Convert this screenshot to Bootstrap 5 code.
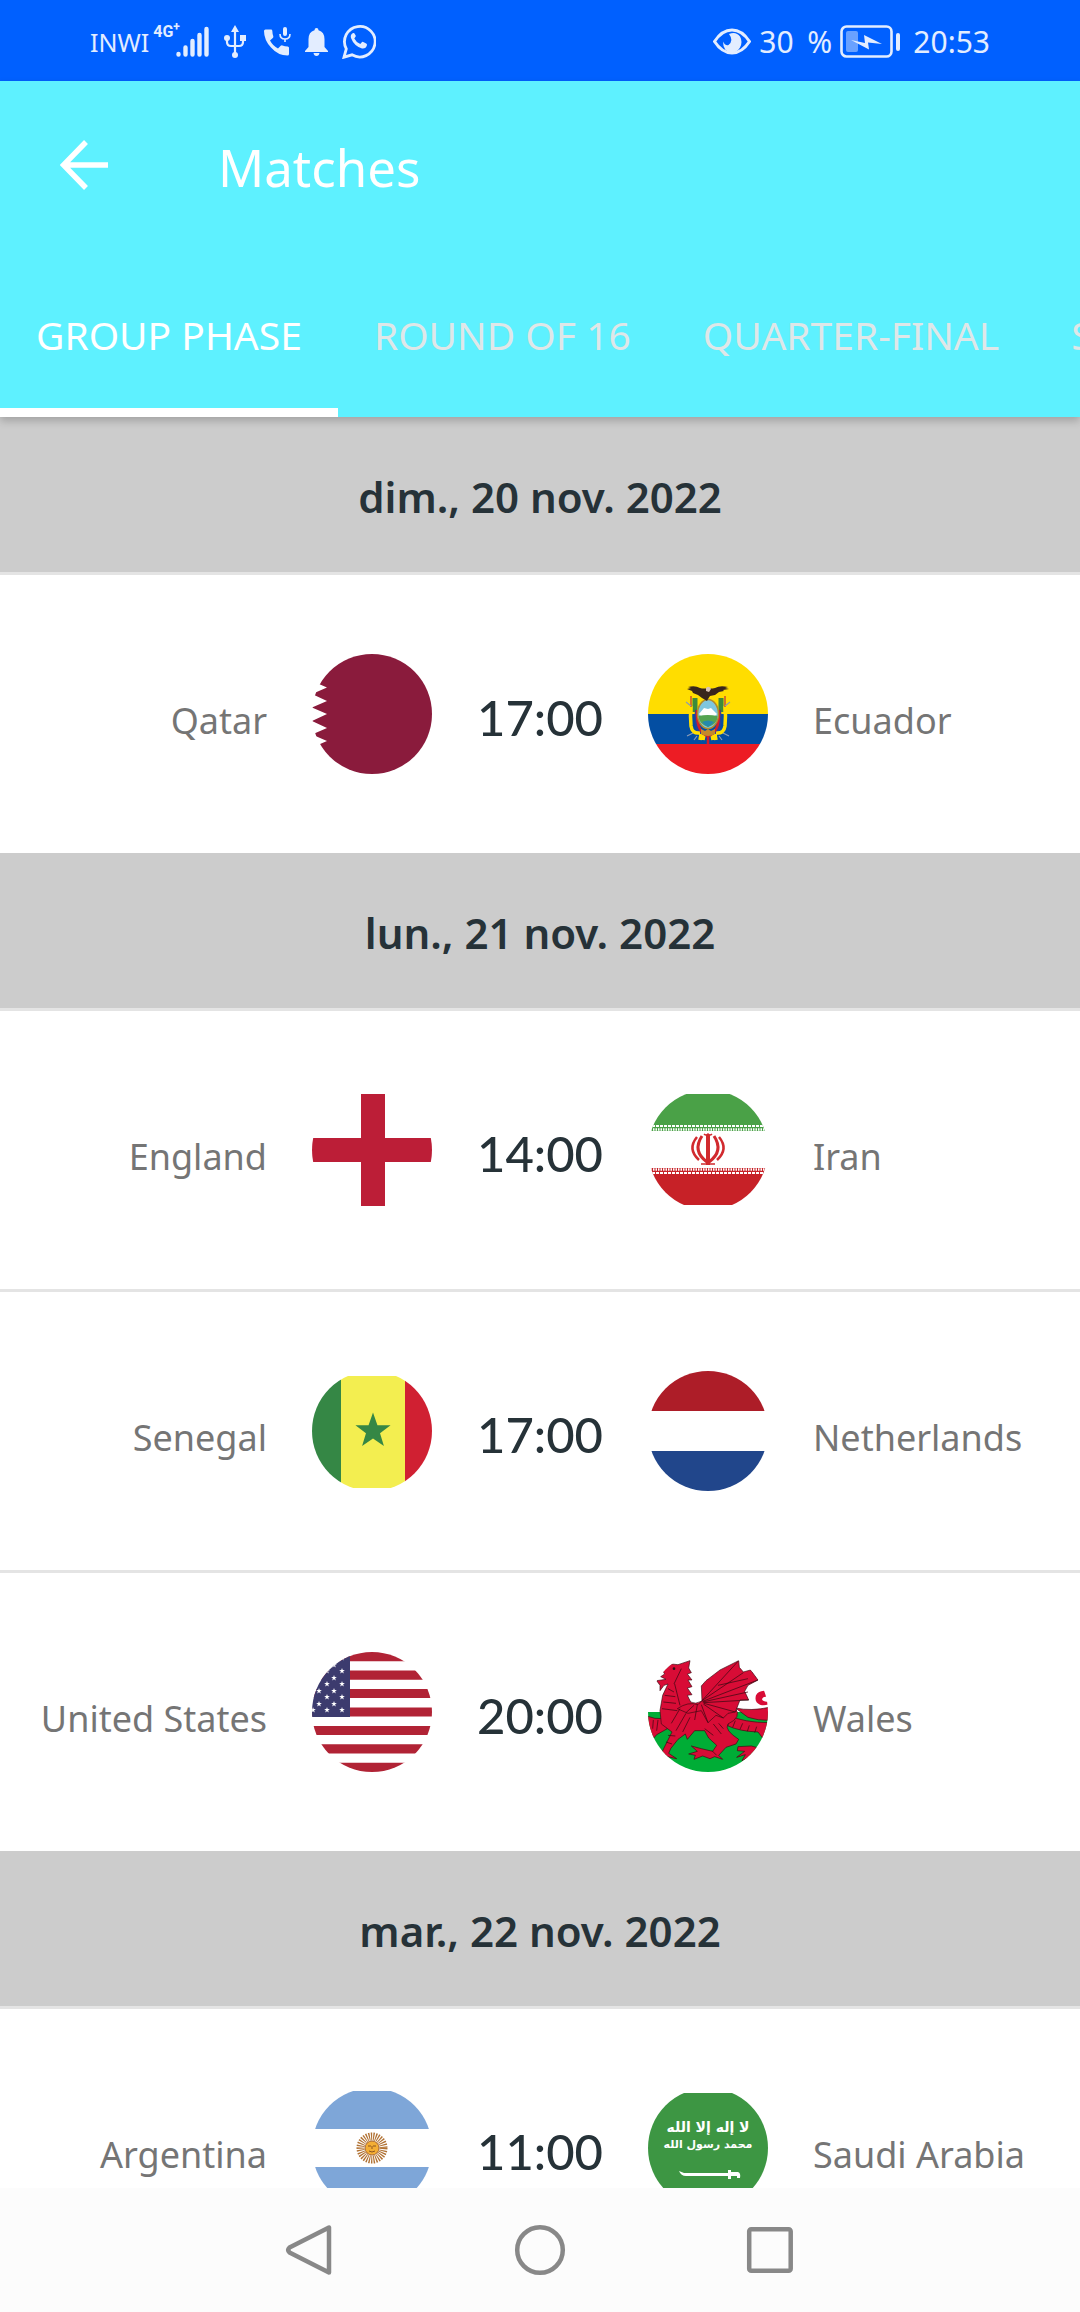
<!DOCTYPE html>
<html lang="fr">
<head>
<meta charset="utf-8">
<meta name="viewport" content="width=device-width, initial-scale=1">
<title>Matches</title>
<link href="https://cdn.jsdelivr.net/npm/bootstrap@5.3.0/dist/css/bootstrap.min.css" rel="stylesheet">
<style>
  body { font-family: "Noto Sans", "Open Sans", sans-serif; color: #263238; background: #fff; }
  svg { display: block; flex: none; }
  .status-strip { height: 81px; background: #0060ff; color: #e3edff; padding: 2px 90px 0; font-size: 30px; line-height: 36px; }
  .status-strip .carrier { font-size: 25px; }
  .status-strip .net-type { font-size: 16px; line-height: 16px; font-weight: 700; font-family: "Roboto", sans-serif; margin-right: -4px; }
  .status-left { gap: 14px; }
  .charge-level { margin: 0 8px; }
  .app-top { background: #5ef1ff; z-index: 2; box-shadow: 0 4px 8px rgba(0,0,0,.2); }
  .title-bar { height: 168px; padding: 0 60px; gap: 110px; }
  .title-bar h1 { font-size: 51px; line-height: 60px; padding-top: 4px; font-weight: 400; color: #fff; }
  .phase-tabs { height: 168px; overflow: hidden; }
  .phase-tabs a { padding: 12px 36px 0; font-size: 39px; line-height: 48px; color: #dfe7e8; border-bottom: 9px solid transparent; }
  .phase-tabs a.current { color: #fff; border-bottom-color: #fff; }
  .match-list { min-height: 0; overflow-y: auto; scrollbar-width: none; }
  .match-list::-webkit-scrollbar { display: none; }
  .day-head { height: 158px; background: #ccc; border-bottom: 3px solid #e4e4e4; font-size: 42px; line-height: 54px; font-weight: 600; margin: 0; padding-top: 4px; }
  .fixture { height: 278px; }
  .fixture + .fixture { height: 281px; border-top: 3px solid #e4e4e4; }
  .team-name { flex: 1 1 0; color: #757575; font-size: 36px; line-height: 48px; padding: 14px 45px 0; }
  .team-name.home-side { text-align: right; padding-left: 0; }
  .team-name.away-side { padding-right: 0; }
  .kickoff { width: 216px; text-align: center; font-family: "Lato", "Noto Sans", sans-serif; font-size: 49px; line-height: 60px; padding-top: 6px; font-weight: 500; }
  .sys-nav { height: 124px; background: #fcfcfc; gap: 174px; }
  .sys-nav button, .title-bar button { background: none; border: 0; padding: 0; }
</style>
</head>
<body>
<svg width="0" height="0" class="position-absolute" aria-hidden="true">
  <defs>
    <clipPath id="disc"><circle cx="60" cy="60" r="60"/></clipPath>
    <path id="star" d="M0-10 2.4-3.1 9.5-3.1 3.8 1.2 5.9 8.1 0 4-5.9 8.1-3.8 1.2-9.5-3.1-2.4-3.1Z"/>
  </defs>
</svg>
<div class="d-flex flex-column vh-100">
  <div class="status-strip d-flex align-items-center justify-content-between text-nowrap flex-shrink-0">
    <div class="status-left d-flex align-items-center">
      <div class="d-flex align-items-center">
        <span class="carrier">INWI</span>
        <span class="net-type align-self-start ms-1">4G<sup>+</sup></span>
        <svg width="34" height="32" viewBox="0 0 34 32" stroke="currentColor" stroke-width="4.400" stroke-linecap="round"><path d="M2.500 28v.5M9.500 21.500v7M16.500 15v13.500M23.500 9v19.500M30.500 3v25.500"/></svg>
      </div>
      <svg width="22" height="33" viewBox="0 0 22 33" fill="none" stroke="currentColor" stroke-width="2.200"><path d="M11 5v24M3 13v4q0 4 4 4h8q4 0 4-4v-4"/><path d="M11 0l4 7H7zM16 10h6v6h-6z" fill="currentColor" stroke="none"/><circle cx="3" cy="13" r="3" fill="currentColor" stroke="none"/><circle cx="11" cy="30" r="3" fill="currentColor" stroke="none"/></svg>
      <svg class="ms-1" width="27" height="29" viewBox="0 0 27 29" fill="currentColor"><path d="M0 4q0-1.500 1.500-1.500H7q1.200 0 1.300 1.300.1 3 1 5.400.3 1-.5 1.700L6 13.500Q9 19 14 21.500l2.700-2.700q.8-.7 1.700-.4 2.400.9 5.300 1 1.300.1 1.300 1.300V27q0 1.500-1.500 1.500Q14 28.500 7 20.500 0 13 0 4Z"/><rect x="19" y="0" width="4" height="9" rx="2"/><path d="M16 7q0 5 5 5t5-5M21 12v3" fill="none" stroke="currentColor" stroke-width="1.600"/></svg>
      <svg width="23" height="28" viewBox="0 0 23 28" fill="currentColor"><path d="M11.500 0q2 0 2 2.300 6 1.700 6 9V19l3.500 4v1H0v-1l3.500-4v-7.700q0-7.300 6-9Q9.500 0 11.500 0ZM8.500 25h6q-.5 3-3 3t-3-3Z"/></svg>
      <svg width="34" height="35" viewBox="0 0 34 35" fill="none" stroke="currentColor" stroke-width="2.800"><path d="M2 33.200l2.300-8.400A15.300 15.300 0 1 1 10 30.800Z"/><path d="M11 9q-3 1.500-2 5 3 8 11 10.500 4 .5 5-3.500.2-1-.8-1.500l-3-1.500q-1-.4-1.600.4l-1.300 1.600q-4-1.500-6-5.500l1.200-1.700q.5-.6.2-1.300L12.300 9.300Q12 8.700 11 9Z" fill="currentColor" stroke="none"/></svg>
    </div>
    <div class="d-flex align-items-center">
      <svg width="38" height="27" viewBox="0 0 38 27"><path d="M1.500 13.500Q9 2 19 2t17.500 11.500Q29 25 19 25T1.500 13.500Z" fill="none" stroke="currentColor" stroke-width="3"/><path d="M16 6q7-3 11 2.500 3 5.500 0 11Q24 24.500 19 24.500q-9-.5-9-11 2 4.500 5.500 3.500Q21 12.500 16 6Z" fill="currentColor"/></svg>
      <span class="charge-level">30&nbsp;&#8202;&#8202;%</span>
      <svg class="me-2" width="61" height="34" viewBox="0 0 61 34"><rect x="1.500" y="1.500" width="50" height="30" rx="5" fill="none" stroke="currentColor" stroke-width="2.600"/><rect x="6" y="6" width="12" height="21" rx="2" fill="#69a1ff"/><path d="M11 15l14 3-1-8 18 9-14-1.500 1 7Z" fill="currentColor"/><rect x="56" y="8" width="4" height="18" rx="2" fill="currentColor"/></svg>
      <span class="ms-1">20:53</span>
    </div>
  </div>

  <header class="app-top position-relative flex-shrink-0">
    <div class="title-bar d-flex align-items-center">
      <button type="button" aria-label="Back"><svg width="48" height="50" viewBox="0 0 48 50" fill="none" stroke="#fff" stroke-width="5.500"><path d="M48 25H4M26 2 3.500 25 26 48"/></svg></button>
      <h1 class="mb-0">Matches</h1>
    </div>
    <nav class="phase-tabs d-flex text-nowrap">
      <a class="current d-flex align-items-center text-decoration-none" href="#group" aria-current="page">GROUP PHASE</a>
      <a class="d-flex align-items-center text-decoration-none" href="#r16">ROUND OF 16</a>
      <a class="d-flex align-items-center text-decoration-none" href="#quarter">QUARTER-FINAL</a>
      <a class="d-flex align-items-center text-decoration-none" href="#semi">SEMI-FINAL</a>
    </nav>
  </header>

  <main class="match-list flex-grow-1 text-nowrap">
    <h2 class="day-head d-flex align-items-center justify-content-center">dim., 20 nov. 2022</h2>
    <div class="fixture d-flex align-items-center">
      <div class="team-name home-side">Qatar</div>
      <svg width="120" height="120" viewBox="0 0 120 120"><g clip-path="url(#disc)"><path fill="#8a1b3c" d="M0 0h120v120H0V93.500L15 87 0 80.500 15 74 0 67 15 60 0 53.500 15 47 0 40 15 33.500 0 27Z"/></g></svg>
      <div class="kickoff">17:00</div>
      <svg width="120" height="120" viewBox="0 0 120 120"><g clip-path="url(#disc)"><path fill="#fd0" d="M0 0h120v60H0z"/><path fill="#034ea2" d="M0 60h120v30H0z"/><path fill="#ed1c24" d="M0 90h120v30H0z"/></g>
        <path d="M47 44v14M73 44v14" stroke="#3c8a3c" stroke-width="5"/><path d="M49 56q-2 18 4 24M71 56q2 18-4 24" fill="none" stroke="#24429b" stroke-width="4"/><path d="M43 52q-1 10 0 20 1 8 9 7M77 52q1 10 0 20-1 8-9 7M53 80l-1 6M56 81l-1 5M67 80l1 6M64 81l1 5" fill="none" stroke="#ffdf00" stroke-width="3.500"/><path d="M49 56q-1 22 11 26 12-4 11-26M60 80v10" fill="none" stroke="#d21e2b" stroke-width="2.500"/><path d="M43 42v11M77 42v11" stroke="#c94f33" stroke-width="1.500"/><path d="M38 48l5 4M82 48l-5 4M39 82l6-3M81 82l-6-3M46 86l3-4M74 86l-3-4" stroke="#8b9bb5" stroke-width="1.200"/>
        <ellipse cx="60" cy="60" rx="10.500" ry="14.500" fill="#7fc6df" stroke="#b28b2d" stroke-width="1.500"/><path d="M51 60l5-6 4 1 3-1 6 6-2 2H53Z" fill="#fff"/><path d="M50.500 62q9-2 19 0 0 8-9.500 11-9-3-9.500-11Z" fill="#54a451"/><path d="M54 68q6-3 12 0-3 4-6 5-4-2-6-5Z" fill="#2589ad"/><path d="M53 75l4 2 3-2 3 2 4-2v5q-7 4-14 0Z" fill="#c5892a"/>
        <path d="M39 35l4-1-3-1q7-2 12 1 4 1 7 0 3 1 8 0 5-3 13-1l-3 1 4 1-6 1 1 1-5 1-4 3-5 1-2 3-1 2-5-3-4-3-5-2-1-2Z" fill="#38251c"/><path d="M58 34q3-3 5 1l-2 3-3-1Z" fill="#d9c2b4"/></svg>
      <div class="team-name away-side">Ecuador</div>
    </div>

    <h2 class="day-head d-flex align-items-center justify-content-center">lun., 21 nov. 2022</h2>
    <div class="fixture d-flex align-items-center">
      <div class="team-name home-side">England</div>
      <svg width="120" height="120" viewBox="0 0 120 120"><g clip-path="url(#disc)" fill="#bc1e37"><path d="M49 4h24v112H49z"/><path d="M0 48h120v24H0z"/></g></svg>
      <div class="kickoff">14:00</div>
      <svg width="120" height="120" viewBox="0 0 120 120"><g clip-path="url(#disc)"><path fill="#4aa147" d="M0 4h120v37H0z"/><path fill="#c72127" d="M0 78h120v37H0z"/><path d="M0 36h120M0 83h120" stroke="#fff" stroke-width="2" stroke-dasharray="3 1"/><path d="M0 39.500h120M0 79.500h120" stroke="#fff" stroke-width="2.500" stroke-dasharray="1.500 1"/></g>
        <g fill="none" stroke="#d12a2e"><path d="M60 45v30" stroke-width="4"/><path d="M56 44q2 2 4 0 2 2 4 0M53 74h14" stroke-width="1.500"/><path d="M54 46q-10 15 5 26M66 46q10 15-5 26" stroke-width="3"/><path d="M49 47q-10 12 2 23M71 47q10 12-2 23" stroke-width="2.500"/></g></svg>
      <div class="team-name away-side">Iran</div>
    </div>
    <div class="fixture d-flex align-items-center">
      <div class="team-name home-side">Senegal</div>
      <svg width="120" height="120" viewBox="0 0 120 120"><g clip-path="url(#disc)"><path fill="#358745" d="M0 5h29v112H0z"/><path fill="#f3ee50" d="M29 5h64v112H29z"/><path fill="#d02032" d="M93 5h27v112H93z"/></g><use href="#star" fill="#358745" transform="translate(61 60) scale(1.850)"/></svg>
      <div class="kickoff">17:00</div>
      <svg width="120" height="120" viewBox="0 0 120 120"><g clip-path="url(#disc)"><path fill="#ad1d28" d="M0 0h120v40H0z"/><path fill="#21468b" d="M0 80h120v40H0z"/></g></svg>
      <div class="team-name away-side">Netherlands</div>
    </div>
    <div class="fixture d-flex align-items-center">
      <div class="team-name home-side">United States</div>
      <svg width="120" height="120" viewBox="0 0 120 120"><g clip-path="url(#disc)"><path stroke="#b12335" stroke-width="9.230" d="M0 4.600h120M0 23.100h120M0 41.500h120M0 60h120M0 78.500h120M0 96.900h120M0 115.400h120"/><path fill="#3c3b6e" d="M0 0h38v65H0z"/>
        <g fill="#fff"><use href="#star" transform="translate(30 19) scale(.3)"/><use href="#star" transform="translate(30 32) scale(.3)"/><use href="#star" transform="translate(30 45) scale(.3)"/><use href="#star" transform="translate(30 58) scale(.3)"/><use href="#star" transform="translate(22 13) scale(.3)"/><use href="#star" transform="translate(22 26) scale(.3)"/><use href="#star" transform="translate(22 39) scale(.3)"/><use href="#star" transform="translate(22 52) scale(.3)"/><use href="#star" transform="translate(15 19) scale(.3)"/><use href="#star" transform="translate(15 32) scale(.3)"/><use href="#star" transform="translate(15 45) scale(.3)"/><use href="#star" transform="translate(15 58) scale(.3)"/><use href="#star" transform="translate(7 39) scale(.3)"/><use href="#star" transform="translate(7 52) scale(.3)"/><use href="#star" transform="translate(1 58) scale(.3)"/><use href="#star" transform="translate(30 6) scale(.3)"/></g></g></svg>
      <div class="kickoff">20:00</div>
      <svg width="120" height="120" viewBox="0 0 120 120"><g clip-path="url(#disc)"><path fill="#00ad36" d="M0 60h120v60H0z"/>
        <g transform="scale(.33333)" stroke="#3b0a12" stroke-width="2" stroke-linejoin="round" fill="#d80c36">
          <path d="M262 168Q310 178 364 166V205Q330 206 300 196Z"/>
          <path d="M364 118Q334 112 324 130 318 150 336 158 350 162 364 156V148Q346 152 342 142 344 130 364 136Z" stroke="none"/>
          <path d="M-4 192Q22 202 44 200L58 230 26 248 14 262 8 240-4 244Z"/>
          <path d="M240 190Q290 212 364 212V256L344 258 330 240Q276 238 240 222Z"/>
          <path d="M364 270 340 290 310 282 270 284 268 296 290 298 266 316 292 308 282 326 304 316 330 330 364 300Z"/>
          <path d="M126 26 122 48 130 62 118 66 132 84 120 84 132 104 118 108 132 128 118 130 128 150Q142 158 160 148L200 150 262 168Q282 196 240 216 228 234 272 262L264 276 234 286 212 310 224 322 200 314 186 320 164 312 138 322 142 310 122 306 148 298 130 282 160 290 194 298 206 280 182 258 170 236 140 236 118 262 112 246 90 262 68 290 62 304 86 320 58 314 44 328 40 304 54 276 72 240 40 216 36 176 44 130 60 96 48 100 36 116 36 100 26 86 40 84 54 82 38 74 50 66 44 56 58 46 70 36 90 38 108 32Z"/>
          <path d="M150 158 162 146 160 102 174 86 216 54 272 26 274 46 286 60 308 54 330 84 300 100 290 118 302 144 276 144 262 180 240 184 226 198 204 190 180 212 160 176 120 184 88 170Q120 148 150 158Z"/>
          <g fill="none" stroke-width="2.200"><path d="M160 148 272 26M162 146 286 62M164 148 330 84M164 150 300 120M166 152 302 144M168 154 262 180M166 156 226 198M160 158 180 212M148 158 140 204M138 160 114 182M210 100 300 80M60 110 78 120M50 130 82 134M46 150 84 154M42 170 88 176M80 96 96 160M100 50 78 96M96 170 70 214M114 184 84 236M126 196 104 240M196 216 220 246M212 214 226 230M170 230 196 250M262 206 254 226M284 214 276 232M304 220 298 238M326 224 320 242M60 250 82 252M54 270 72 276M16 204 14 230M30 204 26 236M192 296 206 310"/></g>
          <circle cx="78" cy="50" r="4" fill="#2b1015" stroke="none"/>
        </g></g></svg>
      <div class="team-name away-side">Wales</div>
    </div>

    <h2 class="day-head d-flex align-items-center justify-content-center">mar., 22 nov. 2022</h2>
    <div class="fixture d-flex align-items-center">
      <div class="team-name home-side">Argentina</div>
      <svg width="120" height="120" viewBox="0 0 120 120"><g clip-path="url(#disc)" fill="#7ea6d8"><path d="M0 3h120v38H0z"/><path d="M0 79h120v38H0z"/></g><circle cx="60" cy="60" r="11.500" fill="none" stroke="#b17234" stroke-width="8" stroke-dasharray="1.200 1"/><circle cx="60" cy="60" r="7" fill="#f4ae35" stroke="#a9652c"/><path d="M56 58h3M61 58h3M57 63q3 2 6 0M60 58v3" stroke="#8c541f" fill="none"/></svg>
      <div class="kickoff">11:00</div>
      <svg width="120" height="120" viewBox="0 0 120 120"><g clip-path="url(#disc)"><path fill="#3d9643" d="M0 5h120v110H0z"/></g>
        <g fill="#fff" font-family="DejaVu Sans, sans-serif" font-weight="700" text-anchor="middle"><text x="60" y="44" font-size="14">لا إله إلا الله</text><text x="60" y="60" font-size="11">محمد رسول الله</text></g>
        <path d="M31 83l5 2h44v-3h3v2h7q3 1 2 6h-3v-2h-6v3h-3v-3H38q-5 0-7-5Z" fill="#fff"/></svg>
      <div class="team-name away-side">Saudi Arabia</div>
    </div>
  </main>

  <div class="sys-nav d-flex align-items-center justify-content-center flex-shrink-0">
    <button type="button" aria-label="Back"><svg width="56" height="56" viewBox="0 0 56 56" fill="none" stroke="#888" stroke-width="4.500" stroke-linejoin="round"><path d="M47 5.500v45L7.500 30.500q-2.500-2.500 0-5Z"/></svg></button>
    <button type="button" aria-label="Home"><svg width="56" height="56" viewBox="0 0 56 56" fill="none" stroke="#888" stroke-width="4.500"><circle cx="28" cy="28" r="22.800"/></svg></button>
    <button type="button" aria-label="Recent apps"><svg width="56" height="56" viewBox="0 0 56 56" fill="none" stroke="#888" stroke-width="4.500"><rect x="7.200" y="7.200" width="41.500" height="41.500" rx="2"/></svg></button>
  </div>
</div>
<script src="https://cdn.jsdelivr.net/npm/bootstrap@5.3.0/dist/js/bootstrap.bundle.min.js"></script>
</body>
</html>
